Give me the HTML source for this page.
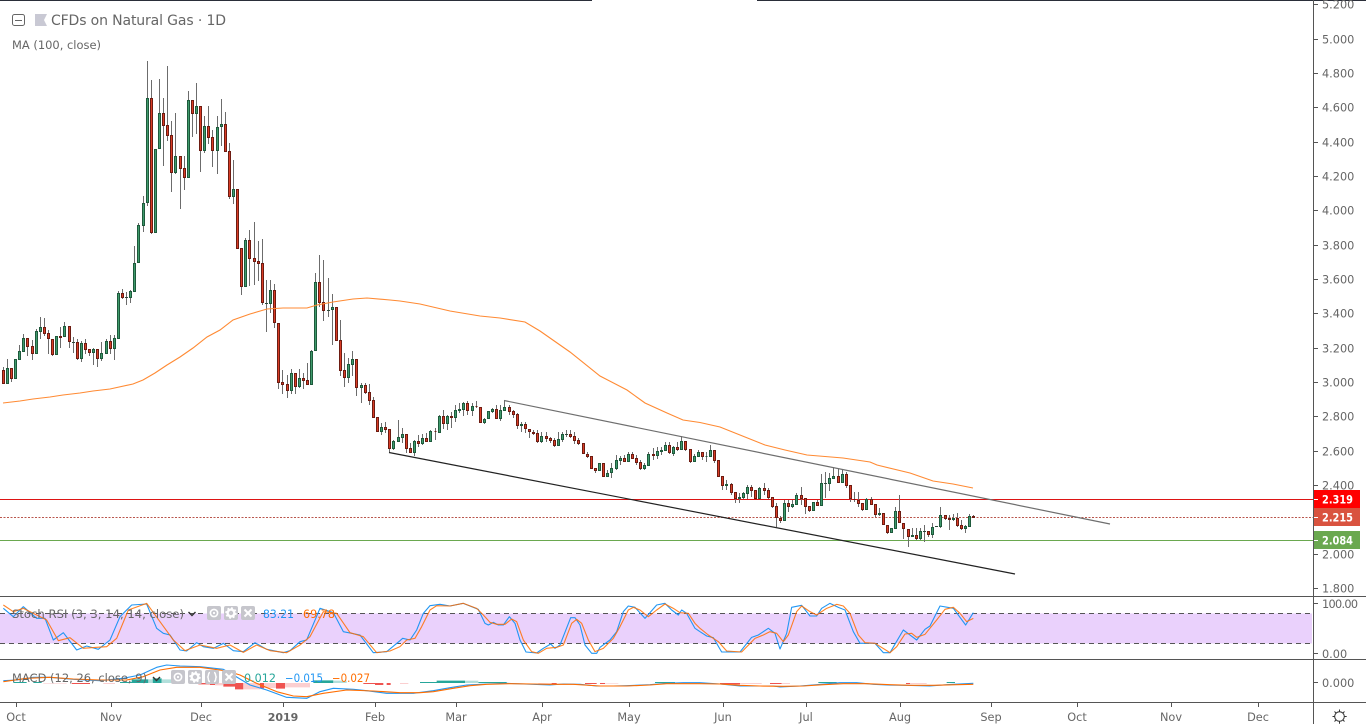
<!DOCTYPE html>
<html><head><meta charset="utf-8"><title>CFDs on Natural Gas</title>
<style>
html,body{margin:0;padding:0;background:#fff;width:1366px;height:724px;overflow:hidden}
svg{display:block}
text{font-family:"DejaVu Sans","Liberation Sans",sans-serif;font-size:11.3px;fill:#666}
</style></head><body>
<svg width="1366" height="724" viewBox="0 0 1366 724" xmlns="http://www.w3.org/2000/svg">
<rect width="1366" height="724" fill="#fff"/>
<path d="M0 .5H592M757 .5H1366" stroke="#2a2e39" stroke-width="1"/>

<!-- level lines -->
<path d="M0 499.5H1313" stroke="#dd1414" stroke-width="1"/>
<path d="M0 517.5H1313" stroke="#b9564c" stroke-width="1" stroke-dasharray="2 1.5"/>
<path d="M0 540.5H1313" stroke="#6aa84f" stroke-width="1"/>

<!-- wicks -->
<path fill="none" stroke="#6c6c6c" stroke-width="1" d="M3.5 367V384M7.5 359V384M11.5 368V382M15.5 359V379M19.5 345V360M23.5 334V352M27.5 338V356M32.5 340V360M36.5 329V354M40.5 317V339M44.5 318V336M48.5 330V354M52.5 339V356M56.5 336V355M60.5 327V348M64.5 322V337M69.5 326V348M73.5 337V353M77.5 339V360M81.5 341V362M85.5 339V354M89.5 349V356M93.5 348V365M97.5 349V367M101.5 342V361M106.5 339V354M110.5 335V354M114.5 335V360M118.5 291V339M122.5 289V299M126.5 292V305M130.5 290V303M134.5 246V292M138.5 223V263M143.5 196V232M147.5 61V206M151.5 80V234M155.5 149V233M159.5 79V149M163.5 98V166M167.5 66V141M171.5 121V192M175.5 113V174M180.5 156V209M184.5 156V190M188.5 91V178M192.5 100V137M196.5 83V134M200.5 106V172M204.5 116V153M208.5 106V144M212.5 130V167M217.5 116V174M221.5 99V146M225.5 112V152M229.5 143V199M233.5 160V204M237.5 189V249M241.5 248V295M245.5 238V287M249.5 230V286M254.5 222V285M258.5 241V281M262.5 239V305M266.5 280V332M270.5 280V313M274.5 284V328M278.5 323V389M282.5 370V394M287.5 375V398M291.5 369V394M295.5 373V394M299.5 369V388M303.5 373V389M307.5 363V385M311.5 350V385M315.5 273V351M319.5 255V307M323.5 260V321M328.5 278V317M332.5 294V345M336.5 307V341M340.5 320V376M344.5 353V387M348.5 358V383M352.5 351V376M356.5 359V396M361.5 383V403M365.5 383V394M369.5 384V405M373.5 397V418M377.5 417V432M381.5 423V435M385.5 422V433M389.5 429V452M393.5 440V450M398.5 420V442M402.5 428V443M406.5 434V453M410.5 443V453M414.5 440V456M418.5 435V447M422.5 434V445M426.5 433V442M430.5 430V442M435.5 428V440M439.5 415V433M443.5 410V429M447.5 415V430M451.5 412V428M455.5 405V422M459.5 403V413M463.5 402V416M467.5 401V415M472.5 403V416M476.5 401V408M480.5 407V423M484.5 418V424M488.5 411V419M492.5 408V413M496.5 405V419M500.5 405V421M504.5 400V411M509.5 405V415M513.5 410V418M517.5 413V429M521.5 422V432M525.5 422V433M529.5 429V438M533.5 430V435M537.5 430V443M541.5 432V443M546.5 432V442M550.5 437V443M554.5 438V447M558.5 432V446M562.5 432V442M566.5 430V437M570.5 430V438M574.5 432V444M578.5 438V445M583.5 443V454M587.5 452V458M591.5 456V469M595.5 468V473M599.5 463V471M603.5 463V477M607.5 470V477M611.5 463V478M616.5 455V470M620.5 456V465M624.5 455V462M628.5 452V462M632.5 452V459M636.5 455V465M640.5 460V470M644.5 463V470M648.5 452V466M653.5 448V460M657.5 447V459M661.5 447V455M665.5 442V451M669.5 442V454M673.5 446V456M677.5 442V451M681.5 436V450M685.5 441V451M690.5 449V463M694.5 454V462M698.5 450V457M702.5 452V460M706.5 452V462M710.5 445V457M714.5 450V463M718.5 460V477M722.5 476V490M726.5 480V490M731.5 483V495M735.5 492V503M739.5 493V503M743.5 492V499M747.5 485V499M751.5 485V497M755.5 490V499M759.5 487V499M764.5 483V495M768.5 488V499M772.5 497V508M776.5 503V527M780.5 516V523M784.5 500V521M788.5 500V512M792.5 500V508M796.5 493V505M801.5 487V505M805.5 498V514M809.5 506V512M813.5 502V511M817.5 500V506M821.5 474V506M825.5 472V498M829.5 473V491M833.5 467V479M838.5 469V483M842.5 470V483M846.5 472V488M850.5 485V502M854.5 492V502M858.5 492V507M862.5 503V511M866.5 498V510M871.5 497V505M875.5 504V517M879.5 508V516M883.5 513V525M887.5 525V534M891.5 528V533M895.5 507V529M899.5 495V523M903.5 523V539M908.5 529V547M912.5 528V537M916.5 528V540M920.5 528V540M924.5 525V542M928.5 531V537M932.5 523V538M936.5 526V527M940.5 507V528M945.5 515V520M949.5 515V530M953.5 514V521M957.5 513V527M961.5 520V530M965.5 525V533M969.5 514V527M973.5 515V518"/>

<!-- green bodies -->
<path fill="#3f9a6c" stroke="#1e5a3c" stroke-width="1" d="M6.5 368.5h2v15h-2zM14.5 359.5h2v19h-2zM18.5 351.5h2v8h-2zM22.5 338.5h2v13h-2zM35.5 331.5h2v22h-2zM39.5 327.5h2v4h-2zM55.5 336.5h2v18h-2zM63.5 326.5h2v10h-2zM80.5 343.5h2v15h-2zM92.5 349.5h2v3h-2zM100.5 353.5h2v5h-2zM105.5 341.5h2v12h-2zM113.5 338.5h2v10h-2zM117.5 293.5h2v45h-2zM129.5 291.5h2v6h-2zM133.5 263.5h2v28h-2zM137.5 225.5h2v37h-2zM142.5 203.5h2v22h-2zM146.5 98.5h2v104h-2zM154.5 149.5h2v83h-2zM158.5 113.5h2v35h-2zM174.5 156.5h2v16h-2zM187.5 100.5h2v77h-2zM195.5 106.5h2v7h-2zM203.5 126.5h2v24h-2zM216.5 127.5h2v23h-2zM220.5 124.5h2v2h-2zM232.5 189.5h2v7h-2zM244.5 240.5h2v46h-2zM269.5 290.5h2v13h-2zM290.5 373.5h2v17h-2zM298.5 378.5h2v8h-2zM310.5 351.5h2v33h-2zM314.5 282.5h2v68h-2zM331.5 307.5h2v2h-2zM347.5 364.5h2v13h-2zM351.5 359.5h2v5h-2zM360.5 385.5h2v2h-2zM380.5 427.5h2v4h-2zM392.5 441.5h2v7h-2zM397.5 437.5h2v4h-2zM401.5 434.5h2v3h-2zM413.5 441.5h2v11h-2zM421.5 438.5h2v5h-2zM429.5 431.5h2v10h-2zM438.5 416.5h2v16h-2zM446.5 416.5h2v7h-2zM454.5 410.5h2v7h-2zM458.5 409.5h2v1h-2zM462.5 403.5h2v6h-2zM471.5 406.5h2v4h-2zM483.5 419.5h2v3h-2zM487.5 411.5h2v7h-2zM491.5 409.5h2v2h-2zM499.5 410.5h2v8h-2zM503.5 407.5h2v3h-2zM520.5 424.5h2v1h-2zM540.5 436.5h2v5h-2zM557.5 439.5h2v6h-2zM561.5 434.5h2v5h-2zM598.5 463.5h2v7h-2zM606.5 473.5h2v3h-2zM610.5 468.5h2v4h-2zM615.5 460.5h2v8h-2zM619.5 458.5h2v2h-2zM627.5 454.5h2v7h-2zM643.5 465.5h2v3h-2zM647.5 454.5h2v11h-2zM656.5 451.5h2v4h-2zM660.5 450.5h2v1h-2zM664.5 445.5h2v5h-2zM672.5 447.5h2v6h-2zM680.5 441.5h2v8h-2zM693.5 456.5h2v5h-2zM697.5 452.5h2v4h-2zM705.5 456.5h2v0h-2zM709.5 450.5h2v6h-2zM725.5 484.5h2v1h-2zM738.5 497.5h2v1h-2zM742.5 493.5h2v4h-2zM746.5 487.5h2v6h-2zM758.5 488.5h2v10h-2zM783.5 503.5h2v17h-2zM791.5 504.5h2v2h-2zM795.5 495.5h2v9h-2zM812.5 502.5h2v8h-2zM820.5 483.5h2v22h-2zM828.5 478.5h2v5h-2zM832.5 476.5h2v2h-2zM841.5 474.5h2v8h-2zM865.5 499.5h2v10h-2zM878.5 513.5h2v1h-2zM890.5 528.5h2v4h-2zM894.5 511.5h2v17h-2zM911.5 535.5h2v1h-2zM919.5 531.5h2v7h-2zM931.5 527.5h2v7h-2zM939.5 515.5h2v11h-2zM952.5 518.5h2v1h-2zM964.5 526.5h2v2h-2zM968.5 516.5h2v10h-2z"/>

<!-- red bodies -->
<path fill="#d93c25" stroke="#6d1c12" stroke-width="1" d="M2.5 370.5h2v13h-2zM10.5 368.5h2v10h-2zM26.5 338.5h2v8h-2zM31.5 346.5h2v7h-2zM43.5 327.5h2v6h-2zM47.5 333.5h2v5h-2zM51.5 339.5h2v15h-2zM59.5 336.5h2v1h-2zM68.5 326.5h2v15h-2zM76.5 342.5h2v16h-2zM84.5 343.5h2v6h-2zM88.5 349.5h2v3h-2zM96.5 349.5h2v9h-2zM109.5 341.5h2v7h-2zM121.5 293.5h2v4h-2zM150.5 98.5h2v134h-2zM162.5 113.5h2v12h-2zM166.5 125.5h2v10h-2zM170.5 135.5h2v37h-2zM179.5 156.5h2v12h-2zM183.5 168.5h2v9h-2zM191.5 100.5h2v13h-2zM199.5 106.5h2v44h-2zM207.5 126.5h2v11h-2zM211.5 137.5h2v13h-2zM224.5 124.5h2v27h-2zM228.5 151.5h2v45h-2zM236.5 189.5h2v59h-2zM240.5 248.5h2v38h-2zM248.5 240.5h2v18h-2zM253.5 258.5h2v3h-2zM257.5 261.5h2v2h-2zM261.5 263.5h2v39h-2zM273.5 290.5h2v32h-2zM277.5 323.5h2v59h-2zM281.5 382.5h2v2h-2zM286.5 384.5h2v6h-2zM294.5 373.5h2v13h-2zM302.5 378.5h2v2h-2zM306.5 380.5h2v4h-2zM318.5 282.5h2v20h-2zM322.5 302.5h2v8h-2zM335.5 307.5h2v33h-2zM339.5 340.5h2v30h-2zM343.5 370.5h2v7h-2zM355.5 359.5h2v28h-2zM364.5 385.5h2v7h-2zM368.5 392.5h2v8h-2zM372.5 400.5h2v17h-2zM376.5 417.5h2v14h-2zM384.5 427.5h2v2h-2zM388.5 429.5h2v19h-2zM405.5 434.5h2v14h-2zM409.5 448.5h2v4h-2zM417.5 441.5h2v2h-2zM425.5 438.5h2v3h-2zM434.5 431.5h2v0h-2zM442.5 416.5h2v7h-2zM450.5 416.5h2v1h-2zM466.5 403.5h2v7h-2zM475.5 406.5h2v0h-2zM479.5 407.5h2v15h-2zM495.5 409.5h2v9h-2zM508.5 407.5h2v4h-2zM512.5 411.5h2v3h-2zM516.5 414.5h2v11h-2zM524.5 424.5h2v4h-2zM528.5 429.5h2v2h-2zM532.5 432.5h2v1h-2zM536.5 433.5h2v8h-2zM545.5 436.5h2v2h-2zM549.5 438.5h2v2h-2zM553.5 440.5h2v5h-2zM569.5 434.5h2v2h-2zM573.5 436.5h2v4h-2zM577.5 440.5h2v3h-2zM582.5 443.5h2v10h-2zM586.5 454.5h2v2h-2zM590.5 456.5h2v12h-2zM594.5 468.5h2v2h-2zM602.5 463.5h2v13h-2zM623.5 458.5h2v3h-2zM631.5 454.5h2v4h-2zM635.5 458.5h2v4h-2zM639.5 462.5h2v6h-2zM652.5 454.5h2v1h-2zM668.5 445.5h2v7h-2zM676.5 447.5h2v2h-2zM684.5 441.5h2v8h-2zM689.5 449.5h2v12h-2zM701.5 452.5h2v4h-2zM713.5 450.5h2v10h-2zM717.5 460.5h2v16h-2zM721.5 476.5h2v9h-2zM730.5 484.5h2v8h-2zM734.5 492.5h2v6h-2zM750.5 487.5h2v3h-2zM754.5 490.5h2v8h-2zM763.5 488.5h2v2h-2zM767.5 490.5h2v7h-2zM771.5 497.5h2v9h-2zM775.5 506.5h2v11h-2zM779.5 518.5h2v2h-2zM787.5 503.5h2v3h-2zM800.5 495.5h2v3h-2zM804.5 498.5h2v8h-2zM808.5 506.5h2v4h-2zM816.5 502.5h2v3h-2zM837.5 476.5h2v6h-2zM845.5 474.5h2v11h-2zM849.5 485.5h2v13h-2zM853.5 499.5h2v0h-2zM857.5 500.5h2v3h-2zM861.5 503.5h2v6h-2zM870.5 499.5h2v5h-2zM874.5 504.5h2v10h-2zM882.5 513.5h2v11h-2zM886.5 525.5h2v7h-2zM898.5 511.5h2v11h-2zM902.5 523.5h2v5h-2zM907.5 529.5h2v7h-2zM915.5 535.5h2v3h-2zM927.5 531.5h2v3h-2zM944.5 515.5h2v3h-2zM948.5 518.5h2v1h-2zM956.5 518.5h2v7h-2zM960.5 525.5h2v3h-2zM972.5 516.5h2v1h-2z"/>
<path fill="none" stroke="#2d4a3a" stroke-width="1" d="M72 342.5h3M125 297.5h3M265 303.5h3M327 310.5h3M565 434.5h3M824 483.5h3M923 531.5h3M935 526.5h3"/>

<!-- MA -->
<polyline fill="none" stroke="#ff8a33" stroke-width="1.1" points="3,403 20,401 33,399 50,397 63,395 80,393 93,391 110,389 133,384 143,380 155,373 167,365 180,357 193,348 207,337 220,330 233,320 250,314 267,309 283,308 307,308 317,305 333,302 353,299 367,298 390,300 400,301 420,304 450,311 480,316 500,318 525,322 540,331 570,352 600,376 627,390 645,403 667,413 683,420 700,422.5 720,427 745,437 765,445 785,450 807,455 843,458 870,462 877,465 910,473 933,481 953,484 973,488"/>

<!-- trend lines -->
<path d="M504 400.5L1110 524" stroke="#6e6e6e" stroke-width="1.2" fill="none"/>
<path d="M389 452.5L1015 574" stroke="#222" stroke-width="1.2" fill="none"/>

<!-- stoch band -->
<rect x="0" y="613.5" width="1312" height="30" fill="#ead1fc"/>
<path d="M0 613.5H1312M0 643.5H1312" stroke="#555" stroke-width="1" stroke-dasharray="5 4" fill="none"/>

<!-- macd histogram -->
<g transform="translate(0 590) scale(.33333)">
<path fill="#26a69a" d="M40 276h40v3H40zM100 276h25v3h-25zM360 276h35v3h-35zM395 268h50v11h-50zM458 265h27v14h-27zM940 271h60v8h-60z"/>
<path fill="#b2dfdb" d="M445 268h13v11h-13zM485 268h30v11h-30zM1000 272h40v7h-40z"/>
<path fill="#ef5350" d="M215 279h55v3h-55zM595 279h35v4h-35zM630 279h15v6h-15zM670 279h35v11h-35zM705 279h25v19h-25zM780 279h12v16h-12zM828 279h27v17h-27zM1090 279h35v3h-35zM1125 279h25v6h-25zM1160 279h12v6h-12z"/>
<path fill="#fbcfd0" d="M130 279h70v2h-70zM310 279h35v3h-35zM645 279h25v7h-25zM730 279h50v19h-50zM792 279h36v15h-36zM855 279h75v13h-75z"/>
</g>
<g transform="translate(400 590) scale(.33333)">
<path fill="#26a69a" d="M60 276h50v3H60zM110 272h85v7h-85zM235 276h85v3h-85zM765 276h60v3h-60z"/>
<path fill="#b2dfdb" d="M195 272h40v7h-40z"/>
<path fill="#fbcfd0" d="M0 279h25v3H0zM415 279h40v2h-40zM615 279h40v2h-40z"/>
<path fill="#ef5350" d="M455 279h15v3h-15zM555 279h35v3h-35zM600 279h15v3h-15z"/>
</g>
<g transform="translate(700 590) scale(.33333)">
<path fill="#26a69a" d="M355 276h55v3h-55zM740 276h25v3h-25z"/>
<path fill="#ef5350" d="M60 279h60v4H60zM210 279h35v3h-35zM618 279h12v3h-12z"/>
<path fill="#fbcfd0" d="M120 279h65v3h-65zM245 279h25v3h-25zM630 279h50v3h-50z"/>
</g>

<!-- oscillator lines -->
<g fill="none" stroke-width="3.3" stroke-linejoin="round">
<g transform="translate(0 590) scale(.33333)">
<polyline stroke="#2196f3" points="10,55 40,80 70,50 110,85 135,85 160,150 190,128 230,180 260,168 295,178 330,150 360,80 395,45 440,42 470,115 490,130 510,135 540,180 560,183 590,158 610,170 640,175 670,160 700,182 730,185 765,158 800,178 850,188 870,182 900,155 920,150 960,55 1000,68 1030,125 1080,135 1120,188 1160,185 1200,152"/>
<polyline stroke="#ff6d00" stroke-opacity=".85" points="10,45 40,65 70,55 110,75 140,90 175,152 210,143 250,175 290,172 320,170 350,145 385,60 440,40 480,95 520,150 555,182 600,165 650,175 690,165 730,187 770,165 810,182 860,188 900,165 930,140 970,65 1010,70 1050,128 1090,140 1130,188 1170,183 1200,170"/>
<polyline stroke="#2196f3" points="10,272 50,270 100,262 150,262 220,268 300,272 370,265 420,255 470,232 500,225 540,228 600,230 670,238 700,255 750,285 800,300 860,322 920,325 960,305 1000,295 1060,298 1100,302 1160,310 1200,310"/>
<polyline stroke="#ff6d00" points="10,275 80,265 150,262 220,267 300,270 380,270 430,260 480,240 530,232 600,232 680,243 720,255 770,280 830,305 880,318 920,320 970,310 1040,300 1120,303 1200,308"/>
</g>
<g transform="translate(400 590) scale(.33333)">
<polyline stroke="#2196f3" points="0,152 8,145 30,150 50,120 70,70 90,47 120,43 150,48 190,40 235,58 255,100 265,105 280,97 295,105 310,105 328,80 345,100 360,150 378,186 410,189 430,175 452,162 465,175 480,165 512,83 525,83 540,105 555,165 575,190 590,190 600,172 630,150 650,125 670,65 685,48 705,52 735,85 770,45 795,40 815,60 835,75 845,60 860,70 885,115 900,125"/>
<polyline stroke="#ff6d00" stroke-opacity=".85" points="0,170 20,150 45,145 65,110 90,60 110,47 150,48 190,40 230,55 250,75 270,97 290,103 315,103 335,87 350,95 370,150 395,185 415,190 440,175 470,172 490,165 515,100 530,88 545,100 565,150 585,185 610,175 640,145 660,110 685,60 700,52 720,60 745,80 770,60 795,42 820,55 840,68 865,70 885,100 900,115"/>
<polyline stroke="#2196f3" points="0,310 40,310 100,302 150,293 200,285 260,282 320,280 400,283 450,285 490,282 540,283 590,288 640,288 680,287 750,284 800,280 850,278 900,278"/>
<polyline stroke="#ff6d00" points="0,308 60,308 100,305 160,295 210,287 260,283 330,281 400,282 450,283 520,283 600,288 680,288 750,285 800,281 900,281"/>
</g>
<g transform="translate(700 590) scale(.33333)">
<polyline stroke="#2196f3" points="0,125 20,138 40,143 65,186 120,186 155,142 175,135 205,115 225,130 240,177 260,130 275,52 305,46 330,78 350,78 365,55 390,40 415,52 435,60 460,125 480,160 525,160 550,188 570,188 610,120 650,150 675,118 690,108 720,48 760,55 797,105 820,68"/>
<polyline stroke="#ff6d00" stroke-opacity=".85" points="0,115 25,135 55,155 80,183 125,186 165,145 190,135 210,125 230,130 250,155 265,135 290,65 305,48 330,65 350,75 380,55 410,43 430,48 450,70 475,135 495,158 525,160 570,188 590,170 615,132 635,130 650,142 675,133 710,90 735,58 760,52 780,70 800,95 820,85"/>
<polyline stroke="#2196f3" points="0,278 60,282 120,288 170,288 220,288 240,291 300,288 350,284 420,278 470,278 520,283 560,285 620,286 690,288 740,284 820,280"/>
<polyline stroke="#ff6d00" points="0,281 60,282 120,286 180,288 250,289 310,288 370,284 430,281 500,281 570,284 630,286 700,286 770,284 820,283"/>
</g>
</g>

<!-- panel separators -->
<path d="M0 596.5H1366M0 659.5H1366M0 702.5H1366" stroke="#555" stroke-width="1" fill="none"/>
<path d="M1313.5 0V724" stroke="#555" stroke-width="1" fill="none"/>

<!-- price ticks -->
<path d="M1314 4.5h4M1314 39.5h4M1314 73.5h4M1314 107.5h4M1314 142.5h4M1314 176.5h4M1314 210.5h4M1314 245.5h4M1314 279.5h4M1314 313.5h4M1314 348.5h4M1314 382.5h4M1314 416.5h4M1314 451.5h4M1314 485.5h4M1314 554.5h4M1314 588.5h4M1314 603.5h4M1314 653.5h4M1314 682.5h4" stroke="#555" stroke-width="1" fill="none"/>

<g>
<text x="1322" y="8.5">5.200</text>
<text x="1322" y="43.5">5.000</text>
<text x="1322" y="77.5">4.800</text>
<text x="1322" y="111.5">4.600</text>
<text x="1322" y="146.5">4.400</text>
<text x="1322" y="180.5">4.200</text>
<text x="1322" y="214.5">4.000</text>
<text x="1322" y="249.5">3.800</text>
<text x="1322" y="283.5">3.600</text>
<text x="1322" y="317.5">3.400</text>
<text x="1322" y="352.5">3.200</text>
<text x="1322" y="386.5">3.000</text>
<text x="1322" y="420.5">2.800</text>
<text x="1322" y="455.5">2.600</text>
<text x="1322" y="489.5">2.400</text>
<text x="1322" y="558.5">2.000</text>
<text x="1322" y="592.5">1.800</text>
<text x="1322" y="608" textLength="36" lengthAdjust="spacing">100.00</text>
<text x="1322" y="658">0.00</text>
<text x="1322" y="687">0.000</text>
</g>

<!-- price labels -->
<rect x="1314" y="490" width="46" height="18" fill="#ff0000"/>
<rect x="1314" y="508" width="46" height="18" fill="#d9533f"/>
<rect x="1314" y="531" width="46" height="18" fill="#6aa84f"/>
<path d="M1314 499.5h4M1314 517.5h4M1314 540.5h4" stroke="#fff" stroke-width="1"/>
<text x="1322" y="503.5" textLength="31" lengthAdjust="spacingAndGlyphs" style="fill:#fff;font-weight:bold">2.319</text>
<text x="1322" y="521.5" textLength="31" lengthAdjust="spacingAndGlyphs" style="fill:#fff;font-weight:bold">2.215</text>
<text x="1322" y="544.5" textLength="31" lengthAdjust="spacingAndGlyphs" style="fill:#fff;font-weight:bold">2.084</text>

<!-- time axis -->
<path d="M16.5 703v4M111.5 703v4M201.5 703v4M283.5 703v4M375.5 703v4M456.5 703v4M542.5 703v4M629.5 703v4M723.5 703v4M806.5 703v4M900.5 703v4M991.5 703v4M1077.5 703v4M1171.5 703v4M1258.5 703v4" stroke="#555" stroke-width="1"/>
<g text-anchor="middle">
<text x="16" y="721">Oct</text>
<text x="111" y="721">Nov</text>
<text x="201" y="721">Dec</text>
<text x="283" y="721" style="font-weight:bold;font-size:11px">2019</text>
<text x="375" y="721">Feb</text>
<text x="456" y="721">Mar</text>
<text x="542" y="721">Apr</text>
<text x="629" y="721">May</text>
<text x="723" y="721">Jun</text>
<text x="806" y="721">Jul</text>
<text x="900" y="721">Aug</text>
<text x="991" y="721">Sep</text>
<text x="1077" y="721">Oct</text>
<text x="1171" y="721">Nov</text>
<text x="1258" y="721">Dec</text>
</g>

<!-- sun/settings icon -->
<g fill="none" stroke="#333" stroke-width="1">
<circle cx="1339.5" cy="716.5" r="4.8"/>
<path d="M1339.5 709.5v2.2M1339.5 721.5v2.2M1332.5 716.5h2.2M1344.5 716.5h2.2M1334.5 711.5l1.5 1.5M1343 720l1.5 1.5M1344.5 711.5l-1.5 1.5M1336 720l-1.5 1.5"/>
</g>

<!-- main legend -->
<rect x="12.5" y="14.5" width="12" height="11" rx="2" fill="none" stroke="#666" stroke-width="1"/>
<path d="M15 20.5h7" stroke="#666" stroke-width="1"/>
<path d="M35 14h12l-3 6 3 6H35z" fill="#c9c9d4"/>
<text x="51" y="25" style="font-size:14px" textLength="175" lengthAdjust="spacing">CFDs on Natural Gas · 1D</text>
<text x="12" y="49" textLength="89" lengthAdjust="spacingAndGlyphs">MA (100, close)</text>

<!-- stoch legend -->
<text x="12" y="618" textLength="172" lengthAdjust="spacingAndGlyphs">Stoch RSI (3, 3, 14, 14, close)</text>
<path d="M188.5 612l3.5 3.5 3.5-3.5" fill="none" stroke="#333" stroke-width="1.4"/>
<rect x="207" y="606" width="14" height="14" rx="2" fill="#c6c6cc"/>
<circle cx="214" cy="613" r="3.6" fill="none" stroke="#fff" stroke-width="1.6"/><circle cx="214" cy="613" r="1.1" fill="#fff"/>
<rect x="224" y="606" width="14" height="14" rx="2" fill="#c6c6cc"/>
<circle cx="231" cy="613" r="3.4" fill="none" stroke="#fff" stroke-width="2.4"/><circle cx="231" cy="613" r="5" fill="none" stroke="#fff" stroke-width="1.4" stroke-dasharray="2 1.9"/>
<rect x="241" y="606" width="14" height="14" rx="2" fill="#c6c6cc"/>
<path d="M244.5 609.5l7 7M251.5 609.5l-7 7" stroke="#fff" stroke-width="2"/>
<text x="263" y="618" style="fill:#2196f3" textLength="31" lengthAdjust="spacingAndGlyphs">83.21</text>
<text x="303" y="618" style="fill:#ff6d00" textLength="32" lengthAdjust="spacingAndGlyphs">69.78</text>

<!-- macd legend -->
<text x="12" y="682" textLength="135" lengthAdjust="spacingAndGlyphs">MACD (12, 26, close, 9)</text>
<path d="M153 677l3.5 3.5 3.5-3.5" fill="none" stroke="#333" stroke-width="1.4"/>
<rect x="171" y="670" width="14" height="14" rx="2" fill="#c6c6cc"/>
<circle cx="178" cy="677" r="3.6" fill="none" stroke="#fff" stroke-width="1.6"/><circle cx="178" cy="677" r="1.1" fill="#fff"/>
<rect x="188" y="670" width="14" height="14" rx="2" fill="#c6c6cc"/>
<circle cx="195" cy="677" r="3.4" fill="none" stroke="#fff" stroke-width="2.4"/><circle cx="195" cy="677" r="5" fill="none" stroke="#fff" stroke-width="1.4" stroke-dasharray="2 1.9"/>
<rect x="205" y="670" width="14" height="14" rx="2" fill="#c6c6cc"/>
<path d="M210 672.5c-2 0-1.2 3.5-2.2 4.5 1 1-.2 4.5 2.2 4.5M214 672.5c2 0 1.2 3.5 2.2 4.5-1 1 .2 4.5-2.2 4.5" fill="none" stroke="#fff" stroke-width="1.5"/>
<rect x="222" y="670" width="14" height="14" rx="2" fill="#c6c6cc"/>
<path d="M225.5 673.5l7 7M232.5 673.5l-7 7" stroke="#fff" stroke-width="2"/>
<text x="244" y="682" style="fill:#26a69a" textLength="32" lengthAdjust="spacingAndGlyphs">0.012</text>
<text x="285" y="682" style="fill:#2196f3" textLength="38" lengthAdjust="spacingAndGlyphs">−0.015</text>
<text x="332" y="682" style="fill:#ff6d00" textLength="38" lengthAdjust="spacingAndGlyphs">−0.027</text>
</svg>
</body></html>
